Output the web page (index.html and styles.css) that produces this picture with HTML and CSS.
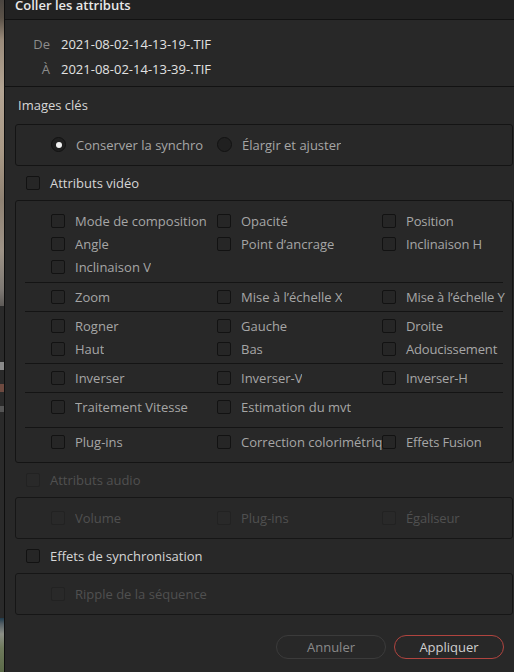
FILE: index.html
```html
<!DOCTYPE html>
<html lang="fr">
<head>
<meta charset="utf-8">
<title>Coller les attributs</title>
<link rel="stylesheet" href="styles.css">
</head>
<body>
<div class="screen">
  <div class="backdrop">
    <div class="bd-photo-top"></div>
    <div class="bd-panel"></div>
    <div class="bd-photo-bottom"></div>
  </div>
  <div class="dialog">
    <div class="titlebar">Coller les attributs</div>
    <div class="files">
      <div class="file-row"><span class="file-label">De</span><span class="file-name">2021-08-02-14-13-19-.TIF</span></div>
      <div class="file-row"><span class="file-label">À</span><span class="file-name">2021-08-02-14-13-39-.TIF</span></div>
    </div>
    <div class="content">
      <div class="section-label">Images clés</div>
      <div class="box">
        <div class="group group-single">
          <div class="opts">
            <div class="opt"><span class="radio radio-on"></span><span class="opt-label">Conserver la synchro</span></div>
            <div class="opt"><span class="radio"></span><span class="opt-label">Élargir et ajuster</span></div>
          </div>
        </div>
      </div>

      <div class="head-row"><span class="check"></span><span class="head-label">Attributs vidéo</span></div>
      <div class="box">
        <div class="group group-first">
          <div class="opts">
            <div class="opt"><span class="check"></span><span class="opt-label">Mode de composition</span></div>
            <div class="opt"><span class="check"></span><span class="opt-label">Opacité</span></div>
            <div class="opt"><span class="check"></span><span class="opt-label">Position</span></div>
            <div class="opt"><span class="check"></span><span class="opt-label">Angle</span></div>
            <div class="opt"><span class="check"></span><span class="opt-label">Point d’ancrage</span></div>
            <div class="opt"><span class="check"></span><span class="opt-label">Inclinaison H</span></div>
            <div class="opt"><span class="check"></span><span class="opt-label">Inclinaison V</span></div>
          </div>
        </div>
        <div class="group">
          <div class="opts">
            <div class="opt"><span class="check"></span><span class="opt-label">Zoom</span></div>
            <div class="opt"><span class="check"></span><span class="opt-label">Mise à l’échelle X</span></div>
            <div class="opt"><span class="check"></span><span class="opt-label">Mise à l’échelle Y</span></div>
          </div>
        </div>
        <div class="group">
          <div class="opts">
            <div class="opt"><span class="check"></span><span class="opt-label">Rogner</span></div>
            <div class="opt"><span class="check"></span><span class="opt-label">Gauche</span></div>
            <div class="opt"><span class="check"></span><span class="opt-label">Droite</span></div>
            <div class="opt"><span class="check"></span><span class="opt-label">Haut</span></div>
            <div class="opt"><span class="check"></span><span class="opt-label">Bas</span></div>
            <div class="opt"><span class="check"></span><span class="opt-label">Adoucissement</span></div>
          </div>
        </div>
        <div class="group">
          <div class="opts">
            <div class="opt"><span class="check"></span><span class="opt-label">Inverser</span></div>
            <div class="opt"><span class="check"></span><span class="opt-label">Inverser-V</span></div>
            <div class="opt"><span class="check"></span><span class="opt-label">Inverser-H</span></div>
          </div>
        </div>
        <div class="group group-tall">
          <div class="opts">
            <div class="opt"><span class="check"></span><span class="opt-label">Traitement Vitesse</span></div>
            <div class="opt"><span class="check"></span><span class="opt-label">Estimation du mvt</span></div>
          </div>
        </div>
        <div class="group group-last">
          <div class="opts">
            <div class="opt"><span class="check"></span><span class="opt-label">Plug-ins</span></div>
            <div class="opt"><span class="check"></span><span class="opt-label">Correction colorimétrique</span></div>
            <div class="opt"><span class="check"></span><span class="opt-label">Effets Fusion</span></div>
          </div>
        </div>
      </div>

      <div class="head-row disabled"><span class="check"></span><span class="head-label">Attributs audio</span></div>
      <div class="box disabled">
        <div class="group group-single">
          <div class="opts">
            <div class="opt"><span class="check"></span><span class="opt-label">Volume</span></div>
            <div class="opt"><span class="check"></span><span class="opt-label">Plug-ins</span></div>
            <div class="opt"><span class="check"></span><span class="opt-label">Égaliseur</span></div>
          </div>
        </div>
      </div>

      <div class="head-row"><span class="check"></span><span class="head-label">Effets de synchronisation</span></div>
      <div class="box disabled">
        <div class="group group-single">
          <div class="opts">
            <div class="opt"><span class="check"></span><span class="opt-label">Ripple de la séquence</span></div>
          </div>
        </div>
      </div>

      <div class="actions">
        <button class="btn btn-cancel">Annuler</button>
        <button class="btn btn-apply">Appliquer</button>
      </div>
    </div>
  </div>
</div>
</body>
</html>
```

FILE: styles.css
```css
* { box-sizing: border-box; }

html, body {
  margin: 0;
  padding: 0;
  background: #1c1c1c;
}

body {
  width: 514px;
  height: 672px;
  overflow: hidden;
  font-family: "Open Sans", "DejaVu Sans", sans-serif;
  font-size: 13px;
}

.screen {
  display: flex;
  width: 514px;
  height: 672px;
}

/* strip of the application behind the dialog */
.backdrop {
  width: 4px;
  flex: none;
  display: flex;
  flex-direction: column;
}
.bd-photo-top {
  height: 306px;
  background: linear-gradient(180deg, #4a4540 0px, #5b5248 18px, #9a8b7b 40px, #b3a493 90px, #a99986 150px, #8f8273 200px, #9e9387 250px, #7d7873 290px, #5d5a57 306px);
}
.bd-panel {
  height: 312px;
  background: linear-gradient(180deg, #2a2a2a 0px, #2a2a2a 56px, #8a8a8a 56px, #8a8a8a 64px, #2a2a2a 64px, #2a2a2a 78px, #6e4a40 78px, #6e4a40 86px, #2a2a2a 86px, #2a2a2a 100px, #555 100px, #555 106px, #2a2a2a 106px);
}
.bd-photo-bottom {
  flex: 1;
  background: linear-gradient(180deg, #1f3b4c 0px, #566066 6px, #8c8f86 16px, #6f7a5c 30px, #5b6a48 54px);
}

.dialog {
  flex: 1;
  min-width: 0;
  background: #282828;
  border-left: 1px solid #0e0e0e;
  overflow: hidden;
}

.titlebar {
  height: 20px;
  background: #222222;
  border-bottom: 1px solid #121212;
  padding-left: 10px;
  color: #e8e8e8;
  font-weight: 600;
  line-height: 11px;
  white-space: nowrap;
}

.files {
  padding: 11px 0 5px;
  border-bottom: 1px solid #121212;
}
.file-row {
  display: flex;
  height: 25px;
  align-items: center;
  gap: 11px;
}
.file-label {
  width: 45px;
  text-align: right;
  color: #8c8c8c;
}
.file-name {
  color: #e2e2e2;
}

.content {
  padding: 0 1px 0 10px;
}

.section-label {
  margin-top: 9px;
  padding-left: 3px;
  height: 18px;
  line-height: 18px;
  color: #d6d6d6;
}

.box {
  margin-top: 10px;
  border: 1px solid #141414;
  border-radius: 3px;
}

.group {
  margin: 0 9px;
  padding: 2px 0 3px;
  border-bottom: 1px solid #141414;
}
.group-first { padding: 8px 0 4px; }
.group-tall { padding: 2px 0 9px; }
.group-last { padding: 2px 0 9px; border-bottom: none; }
.group-single { padding: 8px 0 9px; border-bottom: none; }

.opts {
  display: grid;
  grid-template-columns: 166px 165px 1fr;
  padding-left: 26px;
}

.opt {
  display: flex;
  align-items: center;
  gap: 10px;
  height: 23px;
  min-width: 0;
}
.opt-label {
  color: #a6a6a6;
  white-space: nowrap;
  overflow: hidden;
  min-width: 0;
}
.opt:nth-child(3n) .opt-label {
  overflow: visible;
  letter-spacing: -0.15px;
}

.check {
  flex: none;
  width: 14px;
  height: 14px;
  border: 1px solid #121212;
  border-radius: 2px;
  background: #262626;
}

.radio {
  flex: none;
  position: relative;
  width: 15px;
  height: 15px;
  border: 1px solid #121212;
  border-radius: 50%;
  background: #202020;
}
.radio-on::after {
  content: "";
  position: absolute;
  left: 3.5px;
  top: 3.5px;
  width: 6px;
  height: 6px;
  border-radius: 50%;
  background: #f2f2f2;
}

.head-row {
  display: flex;
  align-items: center;
  gap: 10px;
  height: 23px;
  margin-top: 5px;
  padding-left: 11px;
}
.head-row + .box { margin-top: 6px; }
.head-label {
  color: #d6d6d6;
  white-space: nowrap;
}

.disabled .head-label,
.disabled .opt-label {
  color: #505050;
}
.disabled .check {
  border-color: #222222;
  background: #292929;
}
.box.disabled { border-color: #161616; }

.actions {
  display: flex;
  justify-content: flex-end;
  gap: 8px;
  margin-top: 20px;
  padding-right: 9px;
}
.btn {
  width: 110px;
  height: 24px;
  border-radius: 12px;
  background: transparent;
  font-family: "Open Sans", "DejaVu Sans", sans-serif;
  font-size: 13px;
  padding: 0;
  line-height: 20px;
}
.btn-cancel {
  border: 1px solid #3b3b3b;
  color: #8a8a8a;
}
.btn-apply {
  border: 1px solid #b0443f;
  color: #cfcfcf;
}
```
